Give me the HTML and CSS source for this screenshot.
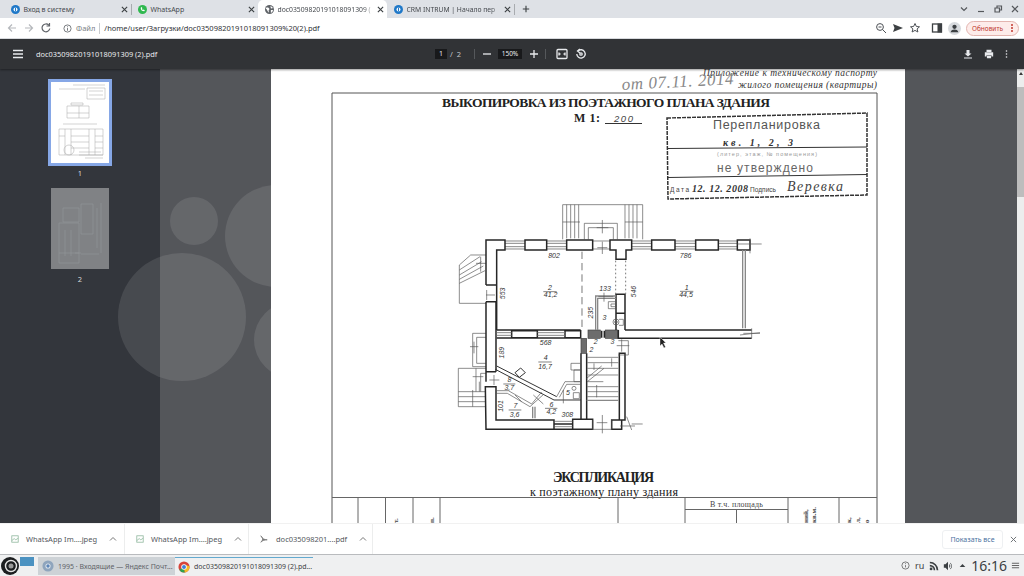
FILE: index.html
```
<!DOCTYPE html>
<html lang="ru">
<head>
<meta charset="utf-8">
<title>doc03509820191018091309 (2).pdf</title>
<link rel="stylesheet" href="styles.css">
</head>
<body>
<div class="tabstrip">
  <div class="tab">
    <svg class="fav" viewBox="0 0 10 10"><circle cx="5" cy="5" r="5" fill="#1f78c8"/><circle cx="5" cy="5" r="2.2" fill="#fff"/><rect x="4.4" y="3" width="1.2" height="4" fill="#1f78c8"/></svg>
    <span class="tab-title">Вход в систему</span>
    <svg class="tab-x" viewBox="0 0 8 8"><path d="M1 1l6 6M7 1L1 7"/></svg>
  </div>
  <i class="tab-sep"></i>
  <div class="tab">
    <svg class="fav" viewBox="0 0 10 10"><circle cx="5" cy="5" r="5" fill="#2fb84f"/><path d="M3 3c0 2.500 1.500 4 4 4l.6-1.300-1.500-.7-.6.600c-.6-.300-1-.8-1.200-1.300l.6-.6-.7-1.500z" fill="#fff"/></svg>
    <span class="tab-title">WhatsApp</span>
    <svg class="tab-x" viewBox="0 0 8 8"><path d="M1 1l6 6M7 1L1 7"/></svg>
  </div>
  <div class="tab tab-active">
    <svg class="fav" viewBox="0 0 10 10"><circle cx="5" cy="5" r="5" fill="#5f6368"/><path d="M2 2.500l2 .5 1 1.500-1 1.500.5 2.500L3 7 2 5 .8 4zM6 1l2.500 1.500L8 4 6.500 3.500zM6.500 5.500L9 5.500 8 8 6.500 8.500z" fill="#fff"/></svg>
    <span class="tab-title tab-fade">doc03509820191018091309 (</span>
    <svg class="tab-x" viewBox="0 0 8 8"><path d="M1 1l6 6M7 1L1 7"/></svg>
  </div>
  <div class="tab">
    <svg class="fav" viewBox="0 0 10 10"><circle cx="5" cy="5" r="5" fill="#1f78c8"/><circle cx="5" cy="5" r="2.200" fill="#fff"/><rect x="4.400" y="3" width="1.200" height="4" fill="#1f78c8"/></svg>
    <span class="tab-title tab-fade">CRM INTRUM | Начало пер</span>
    <svg class="tab-x" viewBox="0 0 8 8"><path d="M1 1l6 6M7 1L1 7"/></svg>
  </div>
  <i class="tab-sep"></i>
  <svg class="tab-plus" viewBox="0 0 10 10"><path d="M5 1v8M1 5h8"/></svg>
  <div class="win-ctl">
    <svg class="ctl" viewBox="0 0 10 10"><path d="M2 3.500l3 3 3-3"/></svg>
    <svg class="ctl" viewBox="0 0 10 10"><path d="M2 7.500h6"/></svg>
    <svg class="ctl" viewBox="0 0 10 10"><path d="M2 4h4.500v4H2zM4 4V2h4.500v4H6.500"/></svg>
    <svg class="ctl" viewBox="0 0 10 10"><path d="M2 2l6 6M8 2L2 8"/></svg>
  </div>
</div>

<div class="toolbar">
  <svg class="nav nav-off" viewBox="0 0 12 12"><path d="M10 6H2.500M6 2.500L2.500 6 6 9.500"/></svg>
  <svg class="nav nav-off" viewBox="0 0 12 12"><path d="M2 6h7.500M6 2.500L9.500 6 6 9.500"/></svg>
  <svg class="nav" viewBox="0 0 12 12"><path d="M9.800 6.500A3.900 3.900 0 1 1 8.800 3.200M9.500 1v3H6.500"/></svg>
  <div class="urlbar">
    <svg class="url-info" viewBox="0 0 10 10"><circle cx="5" cy="5" r="4"/><path d="M5 4.500v3M5 2.600v1"/></svg>
    <span class="url-scheme">Файл</span>
    <i class="url-sep"></i>
    <span class="url-text">/home/user/Загрузки/doc03509820191018091309%20(2).pdf</span>
  </div>
  <div class="tool-right">
    <svg class="tr" viewBox="0 0 12 12"><circle cx="5" cy="5" r="3.400"/><path d="M7.500 7.500L11 11M3.500 5h3"/></svg>
    <svg class="tr tr-fill" viewBox="0 0 12 12"><path d="M1 2l10 4-10 4 1.500-4z"/></svg>
    <svg class="tr" viewBox="0 0 12 12"><path d="M6 1.500l1.400 3 3.100.3-2.400 2.100.8 3.100L6 8.400 3.100 10l.8-3.100-2.400-2.100 3.100-.3z"/></svg>
    <svg class="tr tr-gap" viewBox="0 0 12 12"><rect x="1.500" y="2" width="9" height="8" stroke-width="1.300"/><rect x="7" y="2" width="3.500" height="8" fill="#3c4043"/></svg>
    <svg class="avatar" viewBox="0 0 14 14"><circle cx="7" cy="7" r="7" fill="#d7dade"/><circle cx="7" cy="5.200" r="2.300" fill="#3c4043"/><path d="M2.800 11c.5-2.300 2.300-3 4.200-3s3.700.7 4.200 3z" fill="#3c4043"/></svg>
    <div class="update"><span>Обновить</span><b class="update-dots"></b></div>
  </div>
</div>

<div class="pdfbar">
  <svg class="pdf-ico pdf-burger" viewBox="0 0 10 10"><path d="M0 1.500h10M0 5h10M0 8.500h10"/></svg>
  <span class="pdf-title">doc03509820191018091309 (2).pdf</span>
  <div class="pdf-center">
    <span class="pg-box">1</span>
    <span class="pg-total">/&nbsp; 2</span>
    <i class="pdf-sep sep-a"></i>
    <svg class="pdf-ico pdf-minus" viewBox="0 0 10 10"><path d="M1 5h8"/></svg>
    <span class="zoom-box">150%</span>
    <svg class="pdf-ico" viewBox="0 0 10 10"><path d="M1 5h8M5 1v8"/></svg>
    <i class="pdf-sep sep-b"></i>
    <svg class="pdf-ico pdf-fit" viewBox="0 0 12 12"><rect x="1" y="1.500" width="10" height="9" rx="1"/><path d="M3 4.500V7.500M9 4.500V7.500M3 6h1.500M9 6H7.500"/></svg>
    <svg class="pdf-ico pdf-rot" viewBox="0 0 12 12"><path d="M3 3a4.200 4.200 0 1 1-1.200 3"/><path d="M5 1L2.500 3 5 5"/><circle cx="6" cy="6" r="1.200"/></svg>
  </div>
  <div class="pdf-right">
    <svg class="pdf-ico pdf-solid" viewBox="0 0 10 10"><path d="M3.500 1h3v3.500H8.500L5 7.500 1.500 4.500h2zM1 8.500h8v1H1z"/></svg>
    <svg class="pdf-ico pdf-solid" viewBox="0 0 12 12"><path d="M3 1h6v2.500H3zM1 4h10v5H9V7.500H3V9H1zM3.500 8h5v3h-5z"/></svg>
    <svg class="pdf-ico pdf-solid pdf-dots" viewBox="0 0 4 12"><circle cx="2" cy="2" r="1.100"/><circle cx="2" cy="6" r="1.100"/><circle cx="2" cy="10" r="1.100"/></svg>
  </div>
</div>

<main class="main">
  <aside class="sidebar">
    <div class="thumb thumb-on">
      <svg viewBox="0 0 58 81" class="thumb-svg">
        <path d="M22 3h32M8 7h26M36 6h18v11H36zM38 9h14M38 13h14M20 21h12v2H20zM16 24h22v12H16zM28 24v12M16 31h22M12 42h34M8 47h44v26H8zM14 47v26M20 47v26M38 47v26M44 47v26M20 54h18M20 60h18M20 66h18M8 54h6M44 54h8M44 60h8M44 66h8" class="mini"/>
        <circle cx="18" cy="68" r="5" class="mini"/><path d="M28 70h22M28 73h24M34 76h18" class="mini"/>
      </svg>
    </div>
    <span class="thumb-num">1</span>
    <div class="thumb thumb-off">
      <svg viewBox="0 0 58 81" class="thumb-svg">
        <path d="M12 20h16v14H12zM30 16h12v30H30zM50 15v50M46 20v40M8 35h20v40H8zM14 42v26M20 42v26M8 65h20M24 65h6M30 66h18" class="mini-dim"/>
      </svg>
    </div>
    <span class="thumb-num">2</span>
  </aside>
  <section class="viewer">
    <div class="page">
      <svg class="doc" viewBox="271 69 634 454" width="634" height="454">
        <path class="frame" d="M332 93H877M332 93V523M877 93V523"/>
        <text class="t-serif-i" x="877" y="76" text-anchor="end" textLength="174">Приложение к техническому паспорту</text>
        <text class="t-serif-i" x="877" y="88" text-anchor="end" textLength="139">жилого помещения (квартиры)</text>
        <text class="t-hand" x="622" y="90" transform="rotate(-3 622 90)" textLength="112">от 07.11. 2014</text>
        <text class="t-head" x="442" y="107" textLength="328">ВЫКОПИРОВКА ИЗ ПОЭТАЖНОГО ПЛАНА ЗДАНИЯ</text>
        <text class="t-m" x="574" y="122" textLength="26">М 1:</text>
        <text class="t-scale" x="614" y="122" textLength="19">200</text>
        <path class="thin" d="M605 123.500H642"/>

        <path class="stamp" d="M667 118L867 113L867 195L668 199Z"/>
        <path class="thin" d="M668 148.500L867 147M668 177.500L867 174.500"/>
        <text class="st-a" x="713" y="129" textLength="107">Перепланировка</text>
        <text class="st-b" x="723" y="146" textLength="70">кв. 1, 2, 3</text>
        <text class="st-c" x="717" y="156" textLength="100">(литер, этаж, № помещения)</text>
        <text class="st-d" x="717" y="172" textLength="96">не утверждено</text>
        <text class="st-e" x="670" y="192" textLength="19">Дата</text>
        <text class="st-b" x="692" y="192" textLength="56">12. 12. 2008</text>
        <text class="st-e" x="750" y="192" textLength="26">Подпись</text>
        <text class="st-f" x="787" y="191" textLength="56">Веревка</text>

        <g transform="translate(450 200) scale(.33333)">
          <!-- porch -->
          <path class="pl-g" d="M338 118V14H578V118M350 14V115M362 14V115M374 14V115M386 14V115M525 14V115M537 14V115M549 14V115M561 14V115M338 66H390M525 66H578"/>
          <path class="pl-g" d="M403 118V70H502V118M415 118V83H490V118M457 60V100M440 83H475"/>
          <!-- left stair -->
          <path class="pl-g" d="M108 165H62L28 195V310H108M28 210L90 170M28 225L95 185M28 238L100 198M28 250L105 212M92 170V215M78 190H108"/>
          <!-- lower-left annexes -->
          <path class="pl-g" d="M108 400H68V500H108M108 412H80V490H108M60 440H85M72 425V460M108 505H78V575M108 520H92V575"/>
          <path class="pl-g" d="M78 505H25V620H108M25 575H108M25 590H108M25 605H108M68 530H100M68 570V620M88 545V575"/>
          <!-- top wall windows -->
          <path class="pl-w" d="M165 123H225M165 130H225M165 140H225M165 147H225M290 123H350M290 130H350M290 140H350M290 147H350M545 123H605M545 130H605M545 140H605M545 147H605M675 123H737M675 130H737M675 140H737M675 147H737M805 123H862M805 130H862M805 140H862M805 147H862"/>
          <path class="pl-g" d="M428 123H480M428 147H480M457 125V162M442 143H472"/>
          <!-- piers -->
          <path class="pl-k" d="M225 120H290V150H225ZM350 120H428V150H350ZM480 120H545V150H528V178H498V150H480ZM605 120H675V150H605ZM737 120H805V150H737ZM862 120H900V150H862Z"/>
          <path class="pl-k" d="M108 255V120H165V150H140V390M108 255H140M108 305H140"/>
          <path class="pl-k" d="M108 305V515H138M138 305V515M106 560H138V660H312V688H108ZM108 515V545"/>
          <path class="pl-g" d="M108 285H135M110 270V300M118 540H148M132 525V555"/>
          <path class="pl-k" d="M368 658H428V688H368ZM312 672H368M312 688H368M485 660H515V688H485ZM398 658H428M510 660H525V460H508V660"/>
          <path class="pl-g" d="M312 664H368M312 680H368M428 660V688H485V660M457 645V700M440 668H472"/>
          <path class="pl-g" d="M510 678H555M530 650L545 690M545 672H578"/>
          <!-- middle wall -->
          <path class="pl-k" d="M185 392H262V413H185ZM345 392H392V413H345ZM140 390H392M140 414H392"/>
          <path class="pl-w" d="M140 398H185M140 406H185M262 398H345M262 406H345"/>
          <rect class="pl-h" x="414" y="390" width="37" height="25"/>
          <rect class="pl-h" x="466" y="390" width="38" height="25"/>
          <path class="pl-k" d="M455 392V413M463 392V413"/>
          <path class="pl-k" d="M505 390V415H525M525 283H498V340H525ZM498 340V390M525 390V285M525 390H905M525 415H905"/>
          <rect class="pl-h" x="393" y="415" width="17" height="45"/>
          <path class="pl-k" d="M393 460V658M410 460V658"/>
          <path class="pl-g" d="M505 422H535V465H505M515 418V455M500 437H538"/>
          <path class="pl-g" d="M880 400H930M905 385V415M870 405L930 398M862 132H935M900 115V160"/>
          <path class="pl-gw" d="M878 150V385M886 150V385"/>
          <!-- partition + WC -->
          <path class="pl-gw" d="M437 390V288H498M443 390V295H498"/>
          <path class="pl-g" d="M445 290H490M462 278V305M475 305H498V326H475ZM483 312H498V320H483Z"/>
          <circle class="pl-g" cx="498" cy="366" r="9"/>
          <circle class="pl-g" cx="498" cy="366" r="4"/>
          <path class="pl-g" d="M507 358H520V376H507"/>
          <path class="pl-dash" d="M396 155V385"/>
          <path class="pl-dot" d="M497 182V282M527 182V282"/>
          <!-- stairs -->
          <path class="pl-g" d="M412 472H505M412 488H505M412 505H505M412 525H505M412 545H460M412 560H505M412 575H505M412 590H505M412 545L462 505M410 535L455 498M485 475V500M440 555V592M432 490V510"/>
          <path class="pl-gw" d="M410 601H505"/>
          <!-- diagonal rooms -->
          <path class="pl-k2" d="M140 498L320 590M136 508L312 600H393"/>
          <path class="pl-k2" d="M195 518L212 504L226 518L208 532Z"/>
          <path class="pl-g" d="M138 572H175L245 612L275 576M138 580H172L240 620L282 582M250 585L280 612M195 585L215 605M340 570V610"/>
          <path class="pl-gw" d="M248 620V655M255 620V655"/>
          <path class="pl-g" d="M320 590L345 545H393M328 592L350 553H393M363 490H393V510H363ZM372 510H393V545H372Z"/>
          <circle class="pl-g" cx="372" cy="565" r="6"/>
          <path class="pl-g" d="M370 578H388V596H370Z"/>
          <!-- labels -->
          <g class="pl-t">
            <text x="312" y="173" text-anchor="middle">802</text>
            <text x="300" y="270" text-anchor="middle">2</text>
            <path class="pl-l" d="M280 275H320"/>
            <text x="302" y="292" text-anchor="middle">41,2</text>
            <text x="166" y="280" text-anchor="middle" transform="rotate(-90 166 280)">553</text>
            <text x="710" y="270" text-anchor="middle">1</text>
            <path class="pl-l" d="M690 274H730"/>
            <text x="708" y="292" text-anchor="middle">44,5</text>
            <text x="707" y="175" text-anchor="middle">786</text>
            <text x="465" y="272" text-anchor="middle">133</text>
            <text x="558" y="275" text-anchor="middle" transform="rotate(-90 558 275)">546</text>
            <text x="428" y="338" text-anchor="middle" transform="rotate(-90 428 338)">235</text>
            <text x="463" y="360" text-anchor="middle">3</text>
            <text x="287" y="435" text-anchor="middle">568</text>
            <text x="437" y="433" text-anchor="middle">2</text>
            <text x="487" y="433" text-anchor="middle">3</text>
            <text x="424" y="455" text-anchor="middle">2</text>
            <text x="163" y="458" text-anchor="middle" transform="rotate(-90 163 458)">189</text>
            <text x="287" y="480" text-anchor="middle">4</text>
            <path class="pl-l" d="M265 486H305"/>
            <text x="285" y="507" text-anchor="middle">16,7</text>
            <text x="178" y="546" text-anchor="middle">8</text>
            <path class="pl-l" d="M160 552H196"/>
            <text x="178" y="570" text-anchor="middle">3,7</text>
            <text x="196" y="624" text-anchor="middle">7</text>
            <path class="pl-l" d="M176 630H214"/>
            <text x="194" y="650" text-anchor="middle">3,6</text>
            <text x="160" y="618" text-anchor="middle" transform="rotate(-90 160 618)">101</text>
            <text x="304" y="620" text-anchor="middle">6</text>
            <path class="pl-l" d="M285 625H322"/>
            <text x="304" y="642" text-anchor="middle">4,2</text>
            <text x="352" y="652" text-anchor="middle">308</text>
            <text x="354" y="584" text-anchor="middle">5</text>
          </g>
        </g>
        <path class="cursor" d="M660 337V346L662 344L664 348L665.500 347L663.500 343H666Z"/>

        <text class="t-exp" x="553" y="482" textLength="101">ЭКСПЛИКАЦИЯ</text>
        <text class="t-exp2" x="530" y="496" textLength="148">к поэтажному плану здания</text>
        <path class="tbl" d="M332 497.500H877M358 497.500V523M385.500 497.500V523M413 497.500V523M440 497.500V523M618 497.500V523M685 497.500V523M788 497.500V523M839 497.500V523M685 509.500H788M736.500 509.500V523"/>
        <text class="t-cell" x="710" y="507" textLength="53">В т.ч. площадь</text>
        <text class="t-rot" transform="translate(398 523) rotate(-90)">т.</text>
        <text class="t-rot" transform="translate(434 523) rotate(-90)">п.</text>
        <text class="t-rot" transform="translate(808 523) rotate(-90)">ний,</text>
        <text class="t-rot" transform="translate(816 523) rotate(-90)">кв.м.</text>
        <text class="t-rot" transform="translate(851 523) rotate(-90)">к,</text>
        <text class="t-rot" transform="translate(860 523) rotate(-90)">л,</text>
        <text class="t-rot" transform="translate(869 523) rotate(-90)">о</text>
      </svg>
    </div>
  </section>
  <div class="scrollbar">
    <span class="sb-up"></span>
    <span class="sb-thumb"></span>
  </div>
  <svg class="watermark" viewBox="0 0 271 454" width="271" height="454">
    <circle cx="182" cy="248" r="64"/>
    <circle cx="194" cy="152" r="24"/>
    <circle cx="276" cy="167" r="51"/>
    <circle cx="292" cy="271" r="38"/>
  </svg>
</main>

<div class="downloads">
  <div class="dl">
    <svg class="dl-ico" viewBox="0 0 10 10"><rect x="1" y="1" width="8" height="8"/><path d="M1 7l3-2.500L6 6l3-2"/></svg>
    <span class="dl-name">WhatsApp Im....jpeg</span>
    <svg class="dl-chev" viewBox="0 0 8 8"><path d="M1 5.500l3-3 3 3"/></svg>
  </div>
  <div class="dl">
    <svg class="dl-ico" viewBox="0 0 10 10"><rect x="1" y="1" width="8" height="8"/><path d="M1 7l3-2.500L6 6l3-2"/></svg>
    <span class="dl-name">WhatsApp Im....jpeg</span>
    <svg class="dl-chev" viewBox="0 0 8 8"><path d="M1 5.500l3-3 3 3"/></svg>
  </div>
  <div class="dl">
    <svg class="dl-ico dl-pdf" viewBox="0 0 10 10"><path d="M1 1c3 3 3 5 0 8 2-2 5-3 8-3-3 0-6-1-8-5z"/></svg>
    <span class="dl-name">doc035098201....pdf</span>
    <svg class="dl-chev" viewBox="0 0 8 8"><path d="M1 5.500l3-3 3 3"/></svg>
  </div>
  <button class="show-all">Показать все</button>
  <svg class="dl-close" viewBox="0 0 8 8"><path d="M1 1l6 6M7 1L1 7"/></svg>
</div>

<footer class="taskbar">
  <svg class="start" viewBox="0 0 18 18"><circle cx="9" cy="9" r="9" fill="#1c1e20"/><circle cx="10" cy="9" r="5.500" fill="none" stroke="#e6e6e6" stroke-width="1.400"/><circle cx="10" cy="9" r="2.500" fill="#9a9a9a"/></svg>
  <span class="pager"></span>
  <div class="task task-a">
    <svg class="task-ico" viewBox="0 0 14 14"><circle cx="7" cy="7" r="6.500" fill="#8fa5bd"/><circle cx="7" cy="7" r="3" fill="#e6ebf0"/><circle cx="7" cy="7" r="2" fill="#5d86b8"/></svg>
    <span class="task-name">1995 · Входящие — Яндекс Почт...</span>
  </div>
  <div class="task task-b">
    <svg class="task-ico" viewBox="0 0 14 14"><circle cx="7" cy="7" r="6.500" fill="#d8443a"/><path d="M7 7L1.400 10.200A6.500 6.500 0 0 0 8 13.400z" fill="#2ea24f"/><path d="M7 7l1 6.400A6.500 6.500 0 0 0 13.400 6L7 4z" fill="#f3bd27"/><circle cx="7" cy="7" r="3.200" fill="#fff"/><circle cx="7" cy="7" r="2.300" fill="#3f7fd9"/></svg>
    <span class="task-name task-dark">doc03509820191018091309 (2).pd...</span>
  </div>
  <div class="tray">
    <svg class="tray-ico" viewBox="0 0 12 12"><circle cx="6" cy="6" r="4.800"/><path d="M6 5.500v3M6 3v1.200"/></svg>
    <span class="tray-lang">ru</span>
    <svg class="tray-solid tray-rss" viewBox="0 0 12 12"><circle cx="2.500" cy="9.500" r="1.700"/><path d="M1 4.500a6.500 6.500 0 0 1 6.500 6.500H5.500A4.500 4.500 0 0 0 1 6.500zM1 .8A10.200 10.200 0 0 1 11.200 11H9.200A8.200 8.200 0 0 0 1 2.800z"/></svg>
    <svg class="tray-solid" viewBox="0 0 12 12"><path d="M1 4h2l3-3v10L3 8H1zM7.500 3.500a3.500 3.500 0 0 1 0 5zM9 2a6 6 0 0 1 0 8l-.5-.6a5 5 0 0 0 0-6.800z"/></svg>
    <svg class="tray-arrow" viewBox="0 0 10 10"><path d="M1 7l4-4 4 4z"/></svg>
    <span class="clock">16:16</span>
    <svg class="tray-ico tray-menu" viewBox="0 0 10 10"><path d="M1 2.500h8M1 5h8M1 7.500h8"/></svg>
  </div>
</footer>
</body>
</html>
```

FILE: styles.css
```
* { box-sizing: border-box; }
html, body { margin: 0; padding: 0; }
body {
  width: 1024px; height: 576px; overflow: hidden;
  display: flex; flex-direction: column;
  font-family: "Noto Sans", "Open Sans", sans-serif;
  background: #fff;
}

/* tab strip */
.tabstrip { height: 18px; flex: none; background: #dee1e6; display: flex; align-items: center; padding-left: 4px; color: #45494e; }
.tab { width: 127px; height: 18px; flex: none; display: flex; align-items: center; padding: 0 3px 0 6.500px; font-size: 7px; }
.tab-active { width: 129px; background: #fff; border-radius: 5px 5px 0 0; }
.fav { width: 9px; height: 9px; flex: none; margin-right: 4px; }
.tab-title { flex: 1; min-width: 0; white-space: nowrap; }
.tab-fade { font-size: 6.800px; -webkit-mask-image: linear-gradient(90deg, #000 88%, transparent); mask-image: linear-gradient(90deg, #000 88%, transparent); }
.tab-x { width: 7px; height: 7px; flex: none; margin-left: 2px; fill: none; stroke: #3c4043; stroke-width: 1.300; }
.tab-sep { width: 1px; height: 11px; background: #a8abaf; flex: none; margin-right: -1px; }
.tab-plus { width: 8px; height: 8px; margin-left: 8px; fill: none; stroke: #3c4043; stroke-width: 1.400; flex: none; }
.win-ctl { margin-left: auto; display: flex; align-items: center; gap: 7px; padding-right: 4px; }
.ctl { width: 10px; height: 10px; fill: none; stroke: #55585c; stroke-width: 1.200; }

/* address bar */
.toolbar { height: 21px; flex: none; background: #fff; display: flex; align-items: center; padding-left: 6px; border-bottom: 1px solid #dfe1e5; }
.nav { width: 12px; height: 12px; flex: none; margin-right: 5px; fill: none; stroke: #5f6368; stroke-width: 1.200; }
.nav-off { stroke: #b5b8bc; }
.urlbar { display: flex; align-items: center; margin-left: 6px; }
.url-info { width: 9px; height: 9px; fill: none; stroke: #6b6f74; stroke-width: 1; margin-right: 4px; }
.url-scheme { font-size: 7.500px; color: #7b7f85; }
.url-sep { width: 1px; height: 11px; background: #c8cbcf; margin: 0 4px 0 4px; }
.url-text { font-size: 7.500px; color: #2f3236; white-space: nowrap; }
.tool-right { margin-left: auto; display: flex; align-items: center; padding-right: 5px; gap: 5px; }
.tr { width: 12px; height: 12px; fill: none; stroke: #4d5156; stroke-width: 1; }
.tr-fill { fill: #3c4043; stroke: none; }
.tr-gap { margin-left: 5px; stroke: #3c4043; }
.avatar { width: 13px; height: 13px; }
.update { width: 53px; height: 15px; border-radius: 8px; background: #fdecea; border: 1px solid #e3b5b0; display: flex; align-items: center; padding-left: 5px; font-size: 6.500px; color: #c0392f; }
.update-dots { width: 2px; height: 2px; margin-left: auto; margin-right: 5px; border-radius: 50%; background: #c0392f; box-shadow: 0 -3px #c0392f, 0 3px #c0392f; }

/* pdf toolbar */
.pdfbar { height: 30px; flex: none; background: #313336; display: flex; align-items: center; color: #e8eaed; font-size: 8px; box-shadow: 0 1px 2px rgba(0,0,0,.4); position: relative; z-index: 2; }
.pdf-ico { width: 10px; height: 10px; flex: none; fill: none; stroke: #e8eaed; stroke-width: 1.300; }
.pdf-burger { margin-left: 13px; }
.pdf-title { margin-left: 13px; font-size: 7.400px; white-space: nowrap; }
.pdf-center { position: absolute; left: 435px; top: 0; height: 30px; display: flex; align-items: center; }
.pg-box { width: 12px; height: 10px; background: #18191b; font-size: 7px; line-height: 10px; text-align: center; }
.pg-total { margin-left: 3px; width: 14px; font-size: 7.500px; color: #c4c7ca; }
.pdf-sep { width: 1px; height: 10px; background: #55585b; flex: none; }
.sep-a { margin-left: 10px; }
.pdf-minus { margin-left: 7px; }
.zoom-box { width: 24px; height: 10px; margin: 0 7px 0 6px; background: #18191b; font-size: 6.500px; line-height: 10px; text-align: center; }
.sep-b { margin-left: 6px; }
.pdf-fit { width: 12px; height: 12px; margin-left: 10px; }
.pdf-rot { width: 12px; height: 12px; margin-left: 7px; }
.pdf-right { margin-left: auto; display: flex; align-items: center; gap: 11px; padding-right: 16px; }
.pdf-solid { fill: #e8eaed; stroke: none; }
.pdf-dots { width: 3px; }

/* main area */
.main { height: 454px; flex: none; display: flex; position: relative; overflow: hidden; }
.sidebar { width: 160px; flex: none; background: #33363c; display: flex; flex-direction: column; align-items: center; padding-top: 10px; padding-bottom: 0; }
.thumb { flex: none; }
.thumb-on { width: 64px; height: 87px; border: 3px solid #86a7e6; background: #fff; }
.thumb-off { width: 58px; height: 81px; background: #808285; margin-top: 10px; }
.thumb-svg { width: 100%; height: 100%; display: block; }
.mini { fill: none; stroke: #a5a5a5; stroke-width: .5; }
.mini-dim { fill: none; stroke: #97999c; stroke-width: .5; }
.thumb-num { font-size: 7.500px; line-height: 10px; margin-top: 2px; color: #d6d8da; }
.thumb-off + .thumb-num { margin-top: 5px; }
.viewer { flex: 1; background: #54565a; padding-left: 111px; min-width: 0; }
.page { width: 634px; height: 454px; background: #fff; overflow: hidden; }
.doc { display: block; }
.scrollbar { width: 7px; flex: none; background: #eceded; display: flex; flex-direction: column; align-items: center; }
.sb-up { width: 0; height: 0; margin: 3px 0 12px; border: 2.500px solid transparent; border-top: 0; border-bottom: 3px solid #3a3a3a; }
.sb-thumb { width: 7px; height: 110px; background: #bdbdbd; }
.watermark { position: absolute; left: 0; top: 0; pointer-events: none; }
.watermark circle { fill: #fff; fill-opacity: .1; }

/* document */
.frame { fill: none; stroke: #555; stroke-width: 1; }
.thin { fill: none; stroke: #333; stroke-width: 1; }
.stamp { fill: none; stroke: #333; stroke-width: 1.500; stroke-dasharray: 4 1; }
.t-serif-i { font: italic 9.500px "Liberation Serif", serif; fill: #333; }
.t-hand { font: italic 17px "Liberation Serif", serif; fill: #888; }
.t-head { font: bold 13.500px "Liberation Serif", serif; fill: #222; }
.t-m { font: bold 12px "Liberation Serif", serif; fill: #222; }
.t-scale { font: italic 9.500px "Liberation Sans", sans-serif; fill: #444; }
.st-a { font: 12.500px "Liberation Sans", sans-serif; fill: #555; }
.st-b { font: italic bold 10px "Liberation Serif", serif; fill: #333; }
.st-c { font: 5.500px "Liberation Sans", sans-serif; fill: #999; }
.st-d { font: 12px "Liberation Sans", sans-serif; fill: #666; }
.st-e { font: 6.500px "Liberation Sans", sans-serif; fill: #444; }
.st-f { font: italic 14px "Liberation Serif", serif; fill: #444; }
.pl-g { fill: none; stroke: #555; stroke-width: 2; }
.pl-w { fill: none; stroke: #707070; stroke-width: 2.500; }
.pl-gw { fill: none; stroke: #888; stroke-width: 4; }
.pl-k { fill: none; stroke: #262626; stroke-width: 4.500; }
.pl-k2 { fill: none; stroke: #333; stroke-width: 3; }
.pl-h { fill: #6d6d6d; stroke: #444; stroke-width: 2; }
.pl-dash { fill: none; stroke: #777; stroke-width: 3; stroke-dasharray: 22 12; }
.pl-dot { fill: none; stroke: #777; stroke-width: 3; stroke-dasharray: 5 7; }
.pl-t text { font: italic 21px "Liberation Sans", sans-serif; fill: #333; }
.pl-l { stroke: #444; stroke-width: 2; }
.cursor { fill: #222; stroke: #fff; stroke-width: .4; }
.t-exp { font: bold 14px "Liberation Serif", serif; fill: #222; }
.t-exp2 { font: 12px "Liberation Serif", serif; fill: #222; }
.tbl { fill: none; stroke: #666; stroke-width: 1; }
.t-cell { font: 8px "Liberation Serif", serif; fill: #444; }
.t-rot { font: bold 7px "Liberation Serif", serif; fill: #444; }

/* downloads bar */
.downloads { height: 32px; flex: none; background: #fff; border-bottom: 1px solid #b9bbbe; border-top: 1px solid #f1f1f1; display: flex; align-items: center; color: #53575c; }
.dl { width: 125px; height: 30px; flex: none; display: flex; align-items: center; padding-left: 11px; border-right: 1px solid #eceded; font-size: 7.500px; }
.dl + .dl { width: 124px; }
.dl-ico { width: 8px; height: 8px; flex: none; fill: none; stroke: #8fb79d; stroke-width: 1; margin-right: 7px; }
.dl-pdf { fill: #777; stroke: #777; margin-right: 8px; }
.dl-name { white-space: nowrap; width: 73px; flex: none; }
.dl-chev { width: 8px; height: 8px; margin-left: 10px; fill: none; stroke: #777; stroke-width: 1; }
.show-all { margin-left: auto; width: 61px; height: 19px; padding: 0; background: #fff; border: 1px solid #eef0f2; border-radius: 3px; font: 7px "Noto Sans", sans-serif; color: #49709e; }
.dl-close { width: 7px; height: 7px; margin: 0 7px 0 7px; fill: none; stroke: #5f6368; stroke-width: 1; }

/* taskbar */
.taskbar { height: 21px; flex: none; background: #eff0f1; display: flex; align-items: center; font-size: 7px; }
.start { width: 18px; height: 18px; flex: none; margin: 0 1px 0 1px; }
.pager { width: 14px; height: 9px; flex: none; background: #4b92c1; margin: 0 4px 9px 0; }
.task { width: 138px; height: 18px; flex: none; display: flex; align-items: center; padding-left: 4px; margin-top: 1px; white-space: nowrap; }
.task-a { background: #cdd2d6; width: 137px; color: #5f6368; }
.task-b { border-top: 1px solid #63a9cf; padding-left: 3px; color: #3c4043; }
.task-ico { width: 12px; height: 12px; flex: none; margin-right: 4px; }
.task-name { white-space: nowrap; }
.tray { margin-left: auto; display: flex; align-items: center; padding-right: 4px; color: #3c4043; }
.tray-ico { width: 9px; height: 9px; fill: none; stroke: #555; stroke-width: 1; }
.tray-lang { margin-left: 5px; font-size: 9px; }
.tray-solid { width: 10px; height: 10px; fill: #3c4043; margin-left: 4px; }
.tray-rss { margin-left: 5px; }
.tray-arrow { width: 7px; height: 7px; fill: #3c4043; margin-left: 5.500px; }
.clock { font: 14px "Noto Sans", sans-serif; margin-left: 5.500px; }
.tray-menu { margin-left: 4px; }
```
